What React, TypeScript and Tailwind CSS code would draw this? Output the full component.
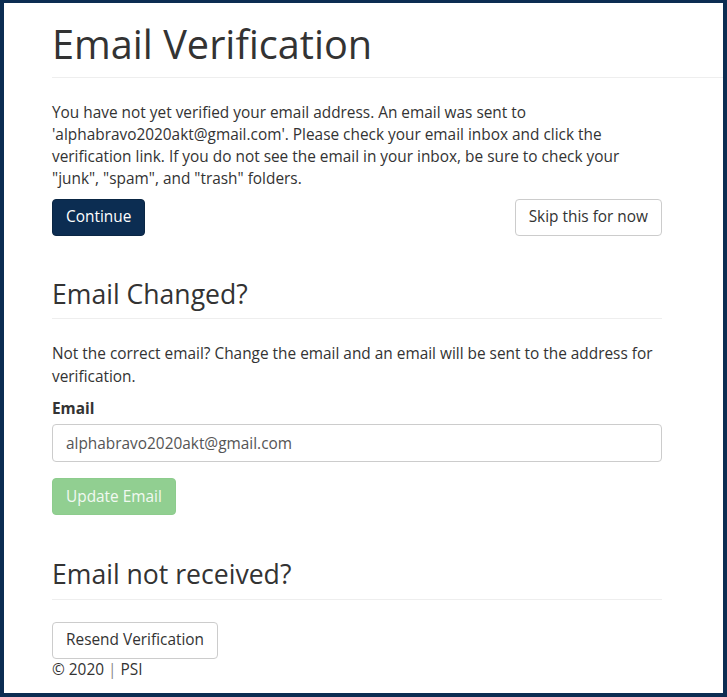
export default function App() {
  return (
    <div
      className="box-border h-[697px] w-[727px] overflow-hidden border-x-4 border-t-[3px] border-b-4 border-[#0c2d52] bg-white pl-12 text-[15.4px] leading-[22.3px] text-[#333]"
      style={{ fontFamily: '"Open Sans", "Liberation Sans", sans-serif' }}
    >
      <div className="mt-[19px] border-b border-[#eee] pb-[10px]">
        <h1 className="text-[39.7px] leading-[44.5px] font-normal">Email Verification</h1>
      </div>

      <div className="w-[610px]">
        <p className="mt-[24px] mb-[8px]">
          You have not yet verified your email address. An email was sent to
          'alphabravo2020akt@gmail.com'. Please check your email inbox and click the verification link. If
          you do not see the email in your inbox, be sure to check your "junk", "spam", and "trash" folders.
        </p>
        <div className="flex items-center justify-between">
          <button className="h-[37px] rounded-[4px] border border-[#0a2644] bg-[#0c2d52] px-[13px] text-white">
            Continue
          </button>
          <button className="h-[37px] rounded-[4px] border border-[#ccc] bg-white px-[13px] text-[#333]">
            Skip this for now
          </button>
        </div>

        <div className="mt-[44px] border-b border-[#eee] pb-[9px]">
          <h3 className="text-[26.6px] leading-[29.6px] font-normal">Email Changed?</h3>
        </div>
        <p className="mt-[24px] mb-[10px]">
          Not the correct email? Change the email and an email will be sent to the address for verification.
        </p>
        <label className="mb-[4px] block font-bold">Email</label>
        <input
          type="email"
          defaultValue="alphabravo2020akt@gmail.com"
          className="box-border block h-[38px] w-full rounded-[4px] border border-[#ccc] px-[13px] text-[#555] outline-none"
        />
        <button
          disabled
          className="mt-[16px] h-[37px] rounded-[4px] border border-[#8dcc8d] bg-[#91cf91] px-[13px] text-[#f1f9f1]"
        >
          Update Email
        </button>

        <div className="mt-[45px] border-b border-[#eee] pb-[9px]">
          <h3 className="text-[26.6px] leading-[29.6px] font-normal">Email not received?</h3>
        </div>
        <button className="mt-[22px] h-[37px] rounded-[4px] border border-[#ccc] bg-white px-[13px] text-[#333]">
          Resend Verification
        </button>
        <p>
          © 2020 <span className="text-[#888]">|</span> PSI
        </p>
      </div>
    </div>
  );
}
